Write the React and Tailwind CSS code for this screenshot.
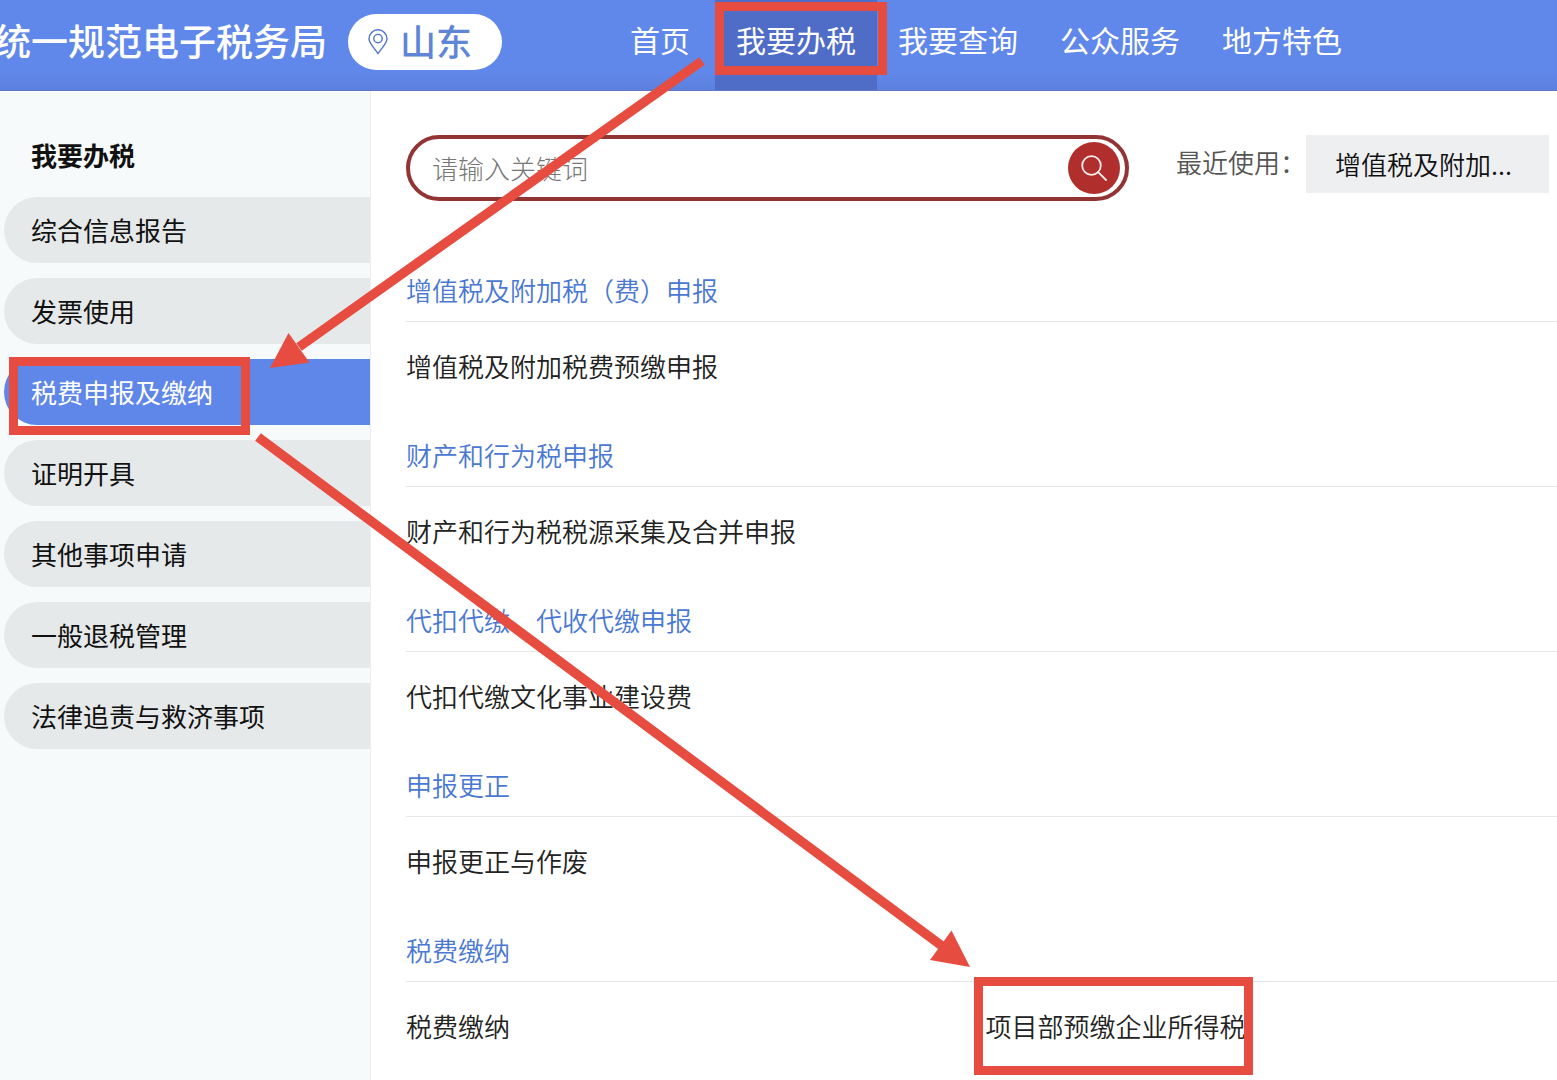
import React from "react";

const navItems = ["首页", "我要办税", "我要查询", "公众服务", "地方特色"];

const sideItems = [
  "综合信息报告",
  "发票使用",
  "税费申报及缴纳",
  "证明开具",
  "其他事项申请",
  "一般退税管理",
  "法律追责与救济事项",
];

const sections = [
  { title: "增值税及附加税（费）申报", items: ["增值税及附加税费预缴申报"] },
  { title: "财产和行为税申报", items: ["财产和行为税税源采集及合并申报"] },
  { title: "代扣代缴、代收代缴申报", items: ["代扣代缴文化事业建设费"] },
  { title: "申报更正", items: ["申报更正与作废"] },
  { title: "税费缴纳", items: ["税费缴纳", "项目部预缴企业所得税"] },
];

const highlighted = "项目部预缴企业所得税";

function PinIcon() {
  return (
    <svg viewBox="0 0 20 26" className="h-[26px] w-5" fill="none" stroke="#4f74c8" strokeWidth="1.4" aria-hidden="true">
      <path d="M10 24.6C7.5 20.4 1 14.6 1 9.8a9 9 0 0 1 18 0c0 4.800-6.500 10.600-9 14.800Z" strokeLinejoin="round" />
      <circle cx="10" cy="9.600" r="4.200" />
    </svg>
  );
}

function SearchIcon() {
  return (
    <svg viewBox="0 0 26 26" className="size-[26px]" fill="none" stroke="#fbeeee" strokeWidth="1.8" strokeLinecap="round" aria-hidden="true">
      <circle cx="10.500" cy="10.500" r="9.300" />
      <path d="M17.200 17.200 25 25" />
    </svg>
  );
}

function Header() {
  return (
    <header className="flex h-[91px] border-b border-[#5f78c4] bg-gradient-to-b from-[#6088ea] from-80% to-[#5c80de] text-white">
      <div className="flex shrink-0 items-center pb-1.5">
        <h1 className="flex h-14 w-[327px] justify-end overflow-hidden whitespace-nowrap text-[37px] font-medium leading-[52px]">
          统一规范电子税务局
        </h1>
        <button type="button" className="ml-[21px] flex h-14 w-[154px] items-center gap-3 rounded-full bg-white pl-5 text-[36px] font-medium leading-[52px] text-[#5f85d6]">
          <PinIcon />
          <span className="h-14">山东</span>
        </button>
      </div>
      <nav className="ml-[103px] flex whitespace-nowrap text-[30px]">
        {navItems.map((item) => {
          const active = item === "我要办税";
          return (
            <a
              key={item}
              href="#"
              className={
                active
                  ? "relative flex min-w-[110px] items-center justify-center bg-[#4f6cc6] px-[21px] pb-3"
                  : "flex min-w-[110px] items-center justify-center px-[21px] pb-3"
              }
            >
              {item}
              {active && <span className="absolute -right-2.5 left-0 top-0.5 h-[73px] border-[9px] border-[#e64d40]" />}
            </a>
          );
        })}
      </nav>
    </header>
  );
}

function Sidebar() {
  return (
    <aside className="w-[371px] shrink-0 border-r border-[#eceeef] bg-[#f7fafb] pl-1 pt-11 text-[#111]">
      <h2 className="mb-[22px] pl-[27px] text-[26px] font-bold leading-10">我要办税</h2>
      <ul className="flex flex-col gap-[15px]">
        {sideItems.map((item) => {
          const active = item === "税费申报及缴纳";
          return (
            <li key={item} className="relative">
              <a
                href="#"
                className={
                  active
                    ? "flex h-[66px] items-center rounded-l-full bg-[#5f86e9] pl-[27px] text-white"
                    : "flex h-[66px] items-center rounded-l-full bg-[#e6e9ea] pl-[27px]"
                }
              >
                {item}
              </a>
              {active && <span className="absolute -top-0.5 left-[5px] h-[78px] w-[241px] border-[9px] border-[#e64d40]" />}
            </li>
          );
        })}
      </ul>
    </aside>
  );
}

function SearchRow() {
  return (
    <div className="flex items-start pr-2">
      <form className="flex h-[66px] flex-1 items-center rounded-full border-4 border-[#933434] pl-[22px] pr-[5px]">
        <input
          type="text"
          aria-label="关键词"
          placeholder="请输入关键词"
          className="min-w-0 flex-1 bg-transparent font-light outline-none placeholder:text-[#777]"
        />
        <button type="submit" aria-label="搜索" className="flex size-[52px] items-center justify-center rounded-full bg-[#b02e2c]">
          <SearchIcon />
        </button>
      </form>
      <div className="ml-[47px] flex h-[58px] items-center">
        <span className="pb-1 font-[350] text-[#555]">最近使用：</span>
        <button type="button" className="h-full w-[243px] bg-[#eeeff1] pl-[29px] text-left font-[350] text-[#111]">
          增值税及附加...
        </button>
      </div>
    </div>
  );
}

function Section({ title, items }) {
  return (
    <section>
      <h3 className="flex h-[61px] items-center border-b border-[#e6e6e6] pb-0.5 font-[350] text-[#4a78d2]">{title}</h3>
      <ul className="grid h-[88px] grid-cols-2 items-center gap-x-2 whitespace-nowrap font-[350] text-[#222]">
        {items.map((item) => (
          <li key={item} className="relative">
            <a href="#">{item}</a>
            {item === highlighted && (
              <span className="absolute -left-3 top-1/2 h-[98px] w-[279px] -translate-y-1/2 border-[9px] border-[#e64d40]" />
            )}
          </li>
        ))}
      </ul>
    </section>
  );
}

function Arrows() {
  return (
    <svg className="pointer-events-none absolute left-0 top-0" width="1557" height="1080" viewBox="0 0 1557 1080" fill="#e64d40" stroke="#e64d40" aria-hidden="true">
      <path d="M702 61 299 347" strokeWidth="9.500" />
      <path d="M270 368 288.500 333 309.500 362.500Z" stroke="none" />
      <path d="M258 437 942 946" strokeWidth="9.500" />
      <path d="M970 967 951.500 930.500 930 960Z" stroke="none" />
    </svg>
  );
}

export default function App() {
  return (
    <div className="relative flex min-h-screen flex-col overflow-hidden bg-white font-['Noto_Sans_CJK_SC',sans-serif] text-[26px] leading-10">
      <Header />
      <div className="flex flex-1">
        <Sidebar />
        <main className="min-w-0 flex-1 pl-[35px] pt-11">
          <SearchRow />
          <div className="mt-[60px] flex flex-col gap-4">
            {sections.map((section) => (
              <Section key={section.title} title={section.title} items={section.items} />
            ))}
          </div>
        </main>
      </div>
      <Arrows />
    </div>
  );
}
